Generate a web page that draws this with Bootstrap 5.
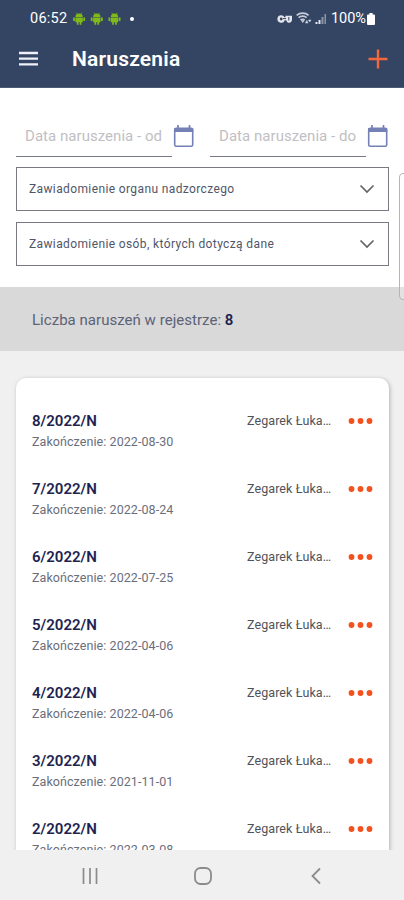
<!DOCTYPE html>
<html lang="pl">
<head>
<meta charset="utf-8">
<meta name="viewport" content="width=device-width, initial-scale=1">
<title>Naruszenia</title>
<link href="https://cdn.jsdelivr.net/npm/bootstrap@5.3.0/dist/css/bootstrap.min.css" rel="stylesheet">
<style>
body{font-family:Roboto,"Liberation Sans",sans-serif;color:#4b5063;height:900px;overflow:hidden;background:#fff}
svg{display:block;flex:none}
.top-area{background:#344563;height:88px;border-bottom:1px solid #4d5b75}
.status-line{height:36px;padding:1px 28px 0 30px;font-size:14.5px;line-height:36px}
.status-line .clock{width:38px;margin-right:5px;white-space:nowrap;letter-spacing:.25px}
.status-dot{width:4px;height:4px;margin-left:9px}
.app-line{height:46px;padding:0 16px 0 19px}
.app-title{font-size:21px;font-weight:600;line-height:24px;margin-left:34px;letter-spacing:.2px}
.filters{height:199px;padding:29px 15px 0 16px}
.date-box{width:156px;height:40px;border-bottom:1px solid #777b84;padding-left:9px;line-height:38px;font-size:15px;letter-spacing:.04px;color:#bfc0c4;white-space:nowrap}
.pick{height:44px;border:1px solid #777a82;padding:0 13px 0 12px;font-size:12px;letter-spacing:.38px;color:#50566a;margin-top:10px}
.pick + .pick{margin-top:11px}
.count-bar{height:64px;background:#d9d9d9;padding-left:32px;font-size:15px;line-height:66px;letter-spacing:.03px;color:#5d6276}
.count-bar b{color:#1d2350;font-weight:600}
.side-tab{right:-8px;top:173px;width:13px;height:127px;border:1px solid #b5b5b5;border-radius:4px;background:rgba(255,255,255,.25)}
.records{height:499px;background:#f0f0f0;padding:27px 15px 0 16px}
.sheet{height:520px;border-radius:10px;padding:33px 16px 0;box-shadow:1px 1px 4px rgba(0,0,0,.26)}
.entry{height:68px}
.entry-id{font-size:15px;line-height:20px;font-weight:600;color:#1d2350}
.entry-end{font-size:12.5px;line-height:20px;margin-top:1px;letter-spacing:.07px;color:#6b6e7c}
.entry-who{font-size:12.5px;line-height:20px;letter-spacing:.08px;color:#505258;width:101px}
.sys-nav{height:50px;background:#f0f0f0;padding:1px 82px 0 82px}
.home-key{margin-left:-2px}
.net-icons{gap:3px;margin-right:4px}
</style>
</head>
<body>
<header class="top-area text-white">
  <div class="status-line d-flex align-items-center">
    <span class="clock">06:52</span>
    <svg width="48" height="14" viewBox="0 0 48 14"><defs><g id="droid" fill="#80b918"><path d="M2.400 5.200a3.700 3.700 0 0 1 7.400 0zM2.400 5.800h7.400v4.500H2.400z"/><path d="M3.800 10h1.700v2.700H3.800zM6.700 10h1.700v2.700H6.700zM.1 5.500h1.800v3.500H.1zM10.300 5.500h1.800v3.500h-1.800z"/><path d="M3.400.8l1 1.500M8.800.8l-1 1.500" stroke="#80b918" stroke-width=".7"/></g></defs><use href="#droid"/><use href="#droid" x="17.700"/><use href="#droid" x="35.400"/></svg>
    <span class="status-dot rounded-circle bg-white"></span>
    <div class="d-flex align-items-center ms-auto">
      <div class="net-icons d-flex align-items-center">
      <svg width="16" height="12" viewBox="0 0 16 12"><path d="M4.200 2.200a3.800 3.800 0 1 0 3.600 5h1.400c.5 1.600 1.600 2.600 3 2.600 1.800 0 2.800-1.400 2.800-3.200V2.800H8.500v1.400h-1a3.800 3.800 0 0 0-3.300-2z" fill="#e3e6ec"/><circle cx="4.200" cy="6" r="1.400" fill="#344563"/><path d="M6 5.600h3M11.800 4v3.500" stroke="#344563"/></svg>
      <svg width="16" height="13" viewBox="0 0 16 13" fill="none" stroke="#c7cdd8" stroke-width="1.700"><path d="M.7 3.400C4 .4 9.300.4 12.600 3.400M2.600 5.700c2.200-2 5.800-2 8 0M4.600 8c1-1 3-1 4 0"/><path d="M5.300 8.500h3l-1.500 2zM9.500 11l1.300-2.500 1.200 2.500zM12.500 8l1.200 2 1.300-2z" fill="#dde1e8" stroke-width=".6"/></svg>
      <svg width="12" height="13" viewBox="0 0 12 13"><path d="M.5 12V10h2v2zM3.500 12V8h2v4z" fill="#e3e6ec"/><path d="M6.500 12V5h2v7zM9.500 12V2h1.500v10z" fill="#8995a9"/></svg>
      </div>
      <span class="text-nowrap">100%</span>
      <svg width="10" height="14" viewBox="0 0 10 14"><path d="M3.400 1h3.200v1.500H8a1 1 0 0 1 1 1V12a1 1 0 0 1-1 1H2a1 1 0 0 1-1-1V3.500a1 1 0 0 1 1-1h1.400z" fill="#fff"/></svg>
    </div>
  </div>
  <div class="app-line d-flex align-items-center">
    <svg width="19" height="16" viewBox="0 0 19 16"><path d="M0 2h19M0 7.700h19M0 13.400h19" stroke="#f0f0fa" stroke-width="2.300"/></svg>
    <h1 class="app-title mb-0">Naruszenia</h1>
    <svg class="ms-auto" width="20" height="20" viewBox="0 0 20 20"><path d="M10 .5v19M.5 10h19" stroke="#f2683e" stroke-width="2.400"/></svg>
  </div>
</header>
<main>
  <section class="filters">
    <div class="d-flex pe-custom">
      <div class="date-box">Data naruszenia - od</div>
      <svg class="mt-2" width="22" height="24" viewBox="0 0 22 24" fill="none" stroke="#7581b4"><rect x="2.700" y="3.200" width="18" height="18" rx="1.500" stroke-width="1.600"/><path d="M2.200 5h19" stroke-width="4"/><path d="M6 0v4M17.500 0v4" stroke-width="1.700"/></svg>
      <div class="date-box ms-auto">Data naruszenia - do</div>
      <svg class="mt-2" width="23" height="24" viewBox="0 0 23 24" fill="none" stroke="#7581b4"><rect x="2.700" y="3.200" width="18" height="18" rx="1.500" stroke-width="1.600"/><path d="M2.200 5h19" stroke-width="4"/><path d="M6 0v4M17.500 0v4" stroke-width="1.700"/></svg>
    </div>
    <div class="pick d-flex align-items-center justify-content-between">Zawiadomienie organu nadzorczego<svg width="16" height="10" viewBox="0 0 16 10"><path d="M1.500 1.500 8 8l6.500-6.500" fill="none" stroke="#656565" stroke-width="1.700"/></svg></div>
    <div class="pick d-flex align-items-center justify-content-between">Zawiadomienie osób, których dotyczą dane<svg width="16" height="10" viewBox="0 0 16 10"><path d="M1.500 1.500 8 8l6.500-6.500" fill="none" stroke="#656565" stroke-width="1.700"/></svg></div>
  </section>
  <div class="count-bar">Liczba naruszeń w rejestrze: <b>8</b></div>
  <section class="records overflow-hidden">
    <div class="sheet bg-white">
      <div class="entry d-flex"><div class="flex-grow-1"><div class="entry-id">8/2022/N</div><div class="entry-end">Zakończenie: 2022-08-30</div></div><div class="entry-who">Zegarek Łuka…</div><svg width="25" height="20" viewBox="0 0 25 20" fill="#f4511e"><circle cx="3.500" cy="10" r="2.900"/><circle cx="12.500" cy="10" r="2.900"/><circle cx="21.500" cy="10" r="2.900"/></svg></div>
      <div class="entry d-flex"><div class="flex-grow-1"><div class="entry-id">7/2022/N</div><div class="entry-end">Zakończenie: 2022-08-24</div></div><div class="entry-who">Zegarek Łuka…</div><svg width="25" height="20" viewBox="0 0 25 20" fill="#f4511e"><circle cx="3.500" cy="10" r="2.900"/><circle cx="12.500" cy="10" r="2.900"/><circle cx="21.500" cy="10" r="2.900"/></svg></div>
      <div class="entry d-flex"><div class="flex-grow-1"><div class="entry-id">6/2022/N</div><div class="entry-end">Zakończenie: 2022-07-25</div></div><div class="entry-who">Zegarek Łuka…</div><svg width="25" height="20" viewBox="0 0 25 20" fill="#f4511e"><circle cx="3.500" cy="10" r="2.900"/><circle cx="12.500" cy="10" r="2.900"/><circle cx="21.500" cy="10" r="2.900"/></svg></div>
      <div class="entry d-flex"><div class="flex-grow-1"><div class="entry-id">5/2022/N</div><div class="entry-end">Zakończenie: 2022-04-06</div></div><div class="entry-who">Zegarek Łuka…</div><svg width="25" height="20" viewBox="0 0 25 20" fill="#f4511e"><circle cx="3.500" cy="10" r="2.900"/><circle cx="12.500" cy="10" r="2.900"/><circle cx="21.500" cy="10" r="2.900"/></svg></div>
      <div class="entry d-flex"><div class="flex-grow-1"><div class="entry-id">4/2022/N</div><div class="entry-end">Zakończenie: 2022-04-06</div></div><div class="entry-who">Zegarek Łuka…</div><svg width="25" height="20" viewBox="0 0 25 20" fill="#f4511e"><circle cx="3.500" cy="10" r="2.900"/><circle cx="12.500" cy="10" r="2.900"/><circle cx="21.500" cy="10" r="2.900"/></svg></div>
      <div class="entry d-flex"><div class="flex-grow-1"><div class="entry-id">3/2022/N</div><div class="entry-end">Zakończenie: 2021-11-01</div></div><div class="entry-who">Zegarek Łuka…</div><svg width="25" height="20" viewBox="0 0 25 20" fill="#f4511e"><circle cx="3.500" cy="10" r="2.900"/><circle cx="12.500" cy="10" r="2.900"/><circle cx="21.500" cy="10" r="2.900"/></svg></div>
      <div class="entry d-flex"><div class="flex-grow-1"><div class="entry-id">2/2022/N</div><div class="entry-end">Zakończenie: 2022-03-08</div></div><div class="entry-who">Zegarek Łuka…</div><svg width="25" height="20" viewBox="0 0 25 20" fill="#f4511e"><circle cx="3.500" cy="10" r="2.900"/><circle cx="12.500" cy="10" r="2.900"/><circle cx="21.500" cy="10" r="2.900"/></svg></div>
    </div>
  </section>
</main>
<div class="side-tab position-absolute"></div>
<footer class="sys-nav d-flex align-items-center justify-content-between">
  <svg width="16" height="18" viewBox="0 0 16 18"><path d="M1.500 1v16M8 1v16M14.500 1v16" stroke="#8b8b8b" stroke-width="1.700"/></svg>
  <svg class="home-key" width="20" height="20" viewBox="0 0 20 20"><rect x="2" y="2" width="16" height="16" rx="5.500" fill="none" stroke="#8b8b8b" stroke-width="1.800"/></svg>
  <svg width="12" height="18" viewBox="0 0 12 18"><path d="M10 1.500 2.500 9l7.500 7.500" fill="none" stroke="#8b8b8b" stroke-width="1.800"/></svg>
</footer>
<script src="https://cdn.jsdelivr.net/npm/bootstrap@5.3.0/dist/js/bootstrap.bundle.min.js"></script>
</body>
</html>
